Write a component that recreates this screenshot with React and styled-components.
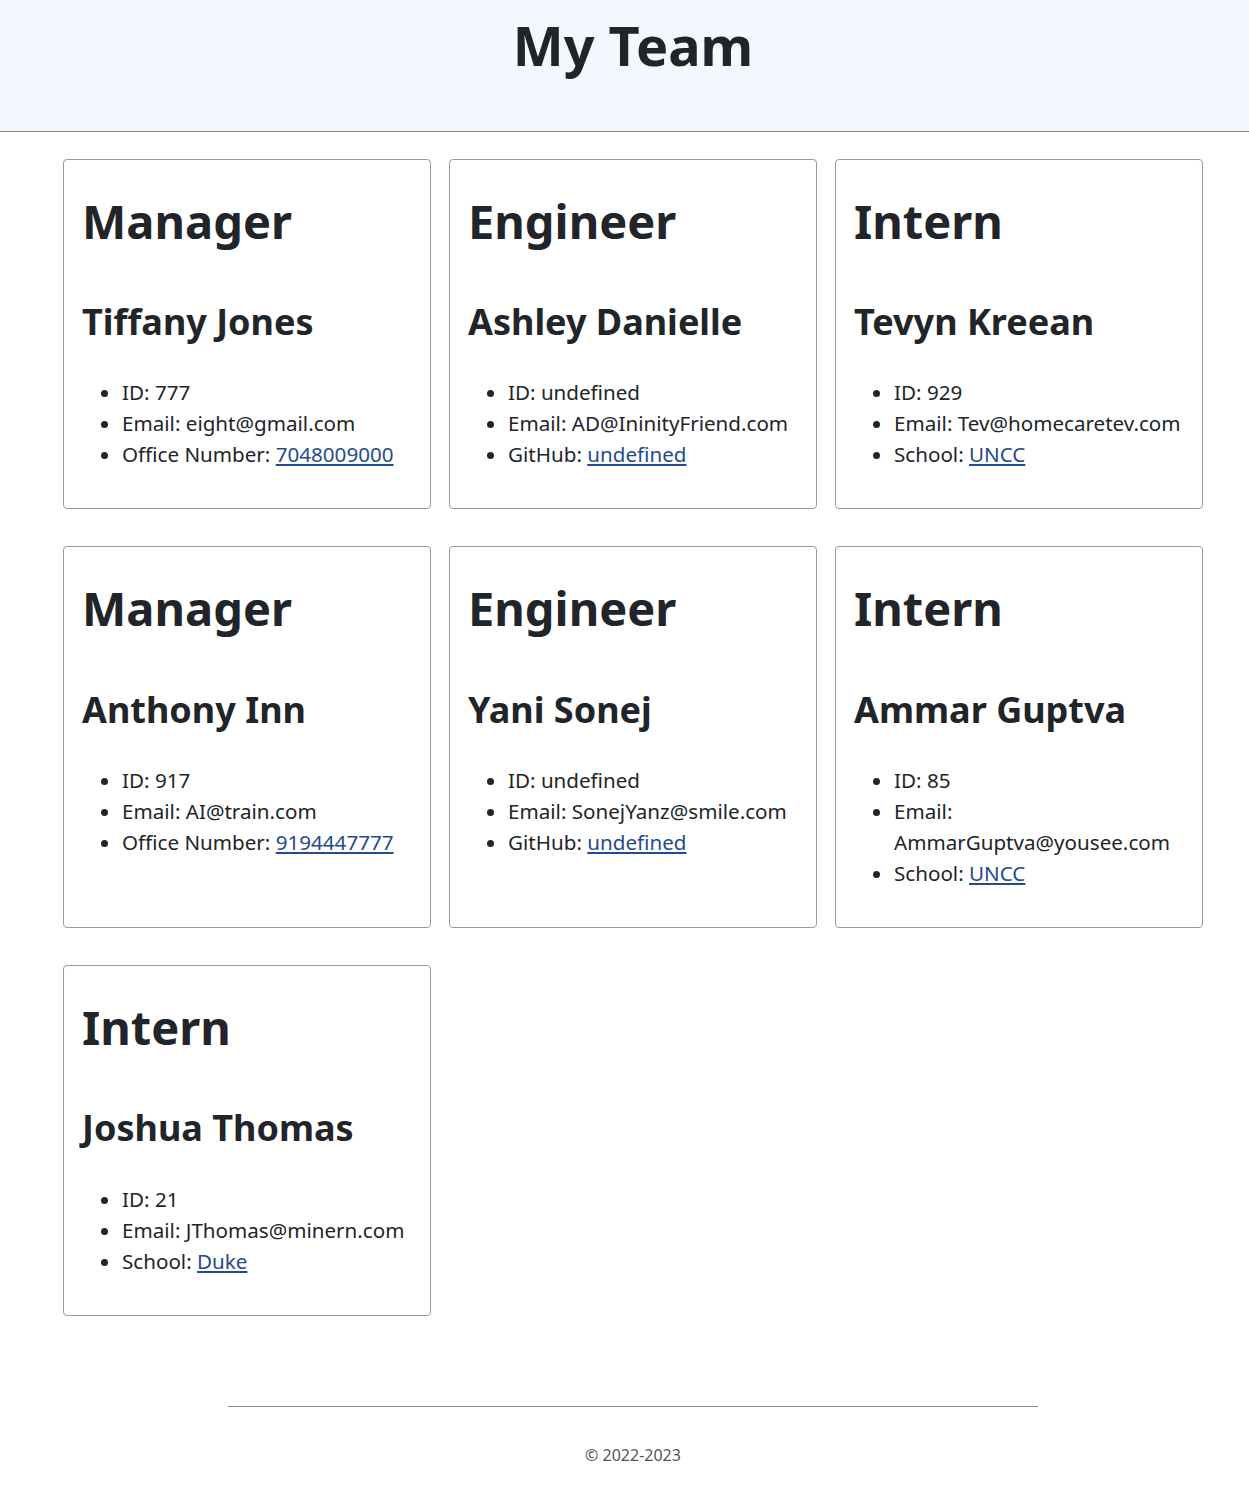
import React from 'react'
import styled, { createGlobalStyle } from 'styled-components'

const GlobalStyle = createGlobalStyle`
  html, body {
    margin: 0;
    padding: 0;
    background: #fff;
  }
  body {
    font-family: "Noto Sans", "Open Sans", sans-serif;
    color: #212529;
  }
`

const team = [
  { role: 'Manager', name: 'Tiffany Jones', id: '777', email: 'eight@gmail.com', extra: 'Office Number', link: '7048009000' },
  { role: 'Engineer', name: 'Ashley Danielle', id: 'undefined', email: 'AD@IninityFriend.com', extra: 'GitHub', link: 'undefined' },
  { role: 'Intern', name: 'Tevyn Kreean', id: '929', email: 'Tev@homecaretev.com', extra: 'School', link: 'UNCC' },
  { role: 'Manager', name: 'Anthony Inn', id: '917', email: 'AI@train.com', extra: 'Office Number', link: '9194447777' },
  { role: 'Engineer', name: 'Yani Sonej', id: 'undefined', email: 'SonejYanz@smile.com', extra: 'GitHub', link: 'undefined' },
  { role: 'Intern', name: 'Ammar Guptva', id: '85', email: 'AmmarGuptva@yousee.com', extra: 'School', link: 'UNCC' },
  { role: 'Intern', name: 'Joshua Thomas', id: '21', email: 'JThomas@minern.com', extra: 'School', link: 'Duke' },
]

const Header = styled.header`
  background: #f4f7fe;
  border-bottom: 1px solid #8c8c8c;
  padding: 13px 0 53px 17px;
  text-align: center;
`

const Title = styled.h1`
  margin: 0;
  font-size: 54px;
  line-height: 1.2;
  font-weight: 700;
`

const Main = styled.main`
  padding-left: 17px;
`

const Grid = styled.div`
  width: 1140px;
  margin: 27px auto 0;
  display: grid;
  grid-template-columns: repeat(3, 368px);
  column-gap: 18px;
  row-gap: 37px;
`

const Card = styled.section`
  border: 1px solid #9a9a9a;
  border-radius: 4px;
  padding: 33px 14px 20px 18px;
`

const Role = styled.h2`
  margin: 0;
  font-size: 47px;
  line-height: 1.2;
  font-weight: 700;
`

const Name = styled.h3`
  margin: 51px 0 0;
  font-size: 36px;
  line-height: 1.2;
  font-weight: 700;
`

const Info = styled.ul`
  margin: 34px 0 18px;
  padding-left: 40px;
  font-size: 20.6px;
  line-height: 31px;
`

const Item = styled.li`
  margin: 0;
`

const Anchor = styled.a`
  color: #244b8d;
  text-decoration: underline;
`

const Footer = styled.footer`
  padding: 90px 0 27px 17px;
  text-align: center;
`

const Rule = styled.hr`
  width: 810px;
  margin: 0 auto;
  border: 0;
  border-top: 1px solid #8c8c8c;
`

const Copy = styled.p`
  margin: 36px 0 0;
  font-size: 16px;
  line-height: 24px;
  color: #555;
`

const MemberCard = ({ m }) => (
  <Card>
    <Role>{m.role}</Role>
    <Name>{m.name}</Name>
    <Info>
      <Item>ID: {m.id}</Item>
      <Item>Email: {m.email}</Item>
      <Item>{m.extra}: <Anchor href="#">{m.link}</Anchor></Item>
    </Info>
  </Card>
)

const App = () => {
  return (
    <>
      <GlobalStyle />
      <Header>
        <Title>My Team</Title>
      </Header>
      <Main>
        <Grid>
          {team.map((m, i) => (
            <MemberCard key={i} m={m} />
          ))}
        </Grid>
      </Main>
      <Footer>
        <Rule />
        <Copy>© 2022-2023</Copy>
      </Footer>
    </>
  )
}

export default App
